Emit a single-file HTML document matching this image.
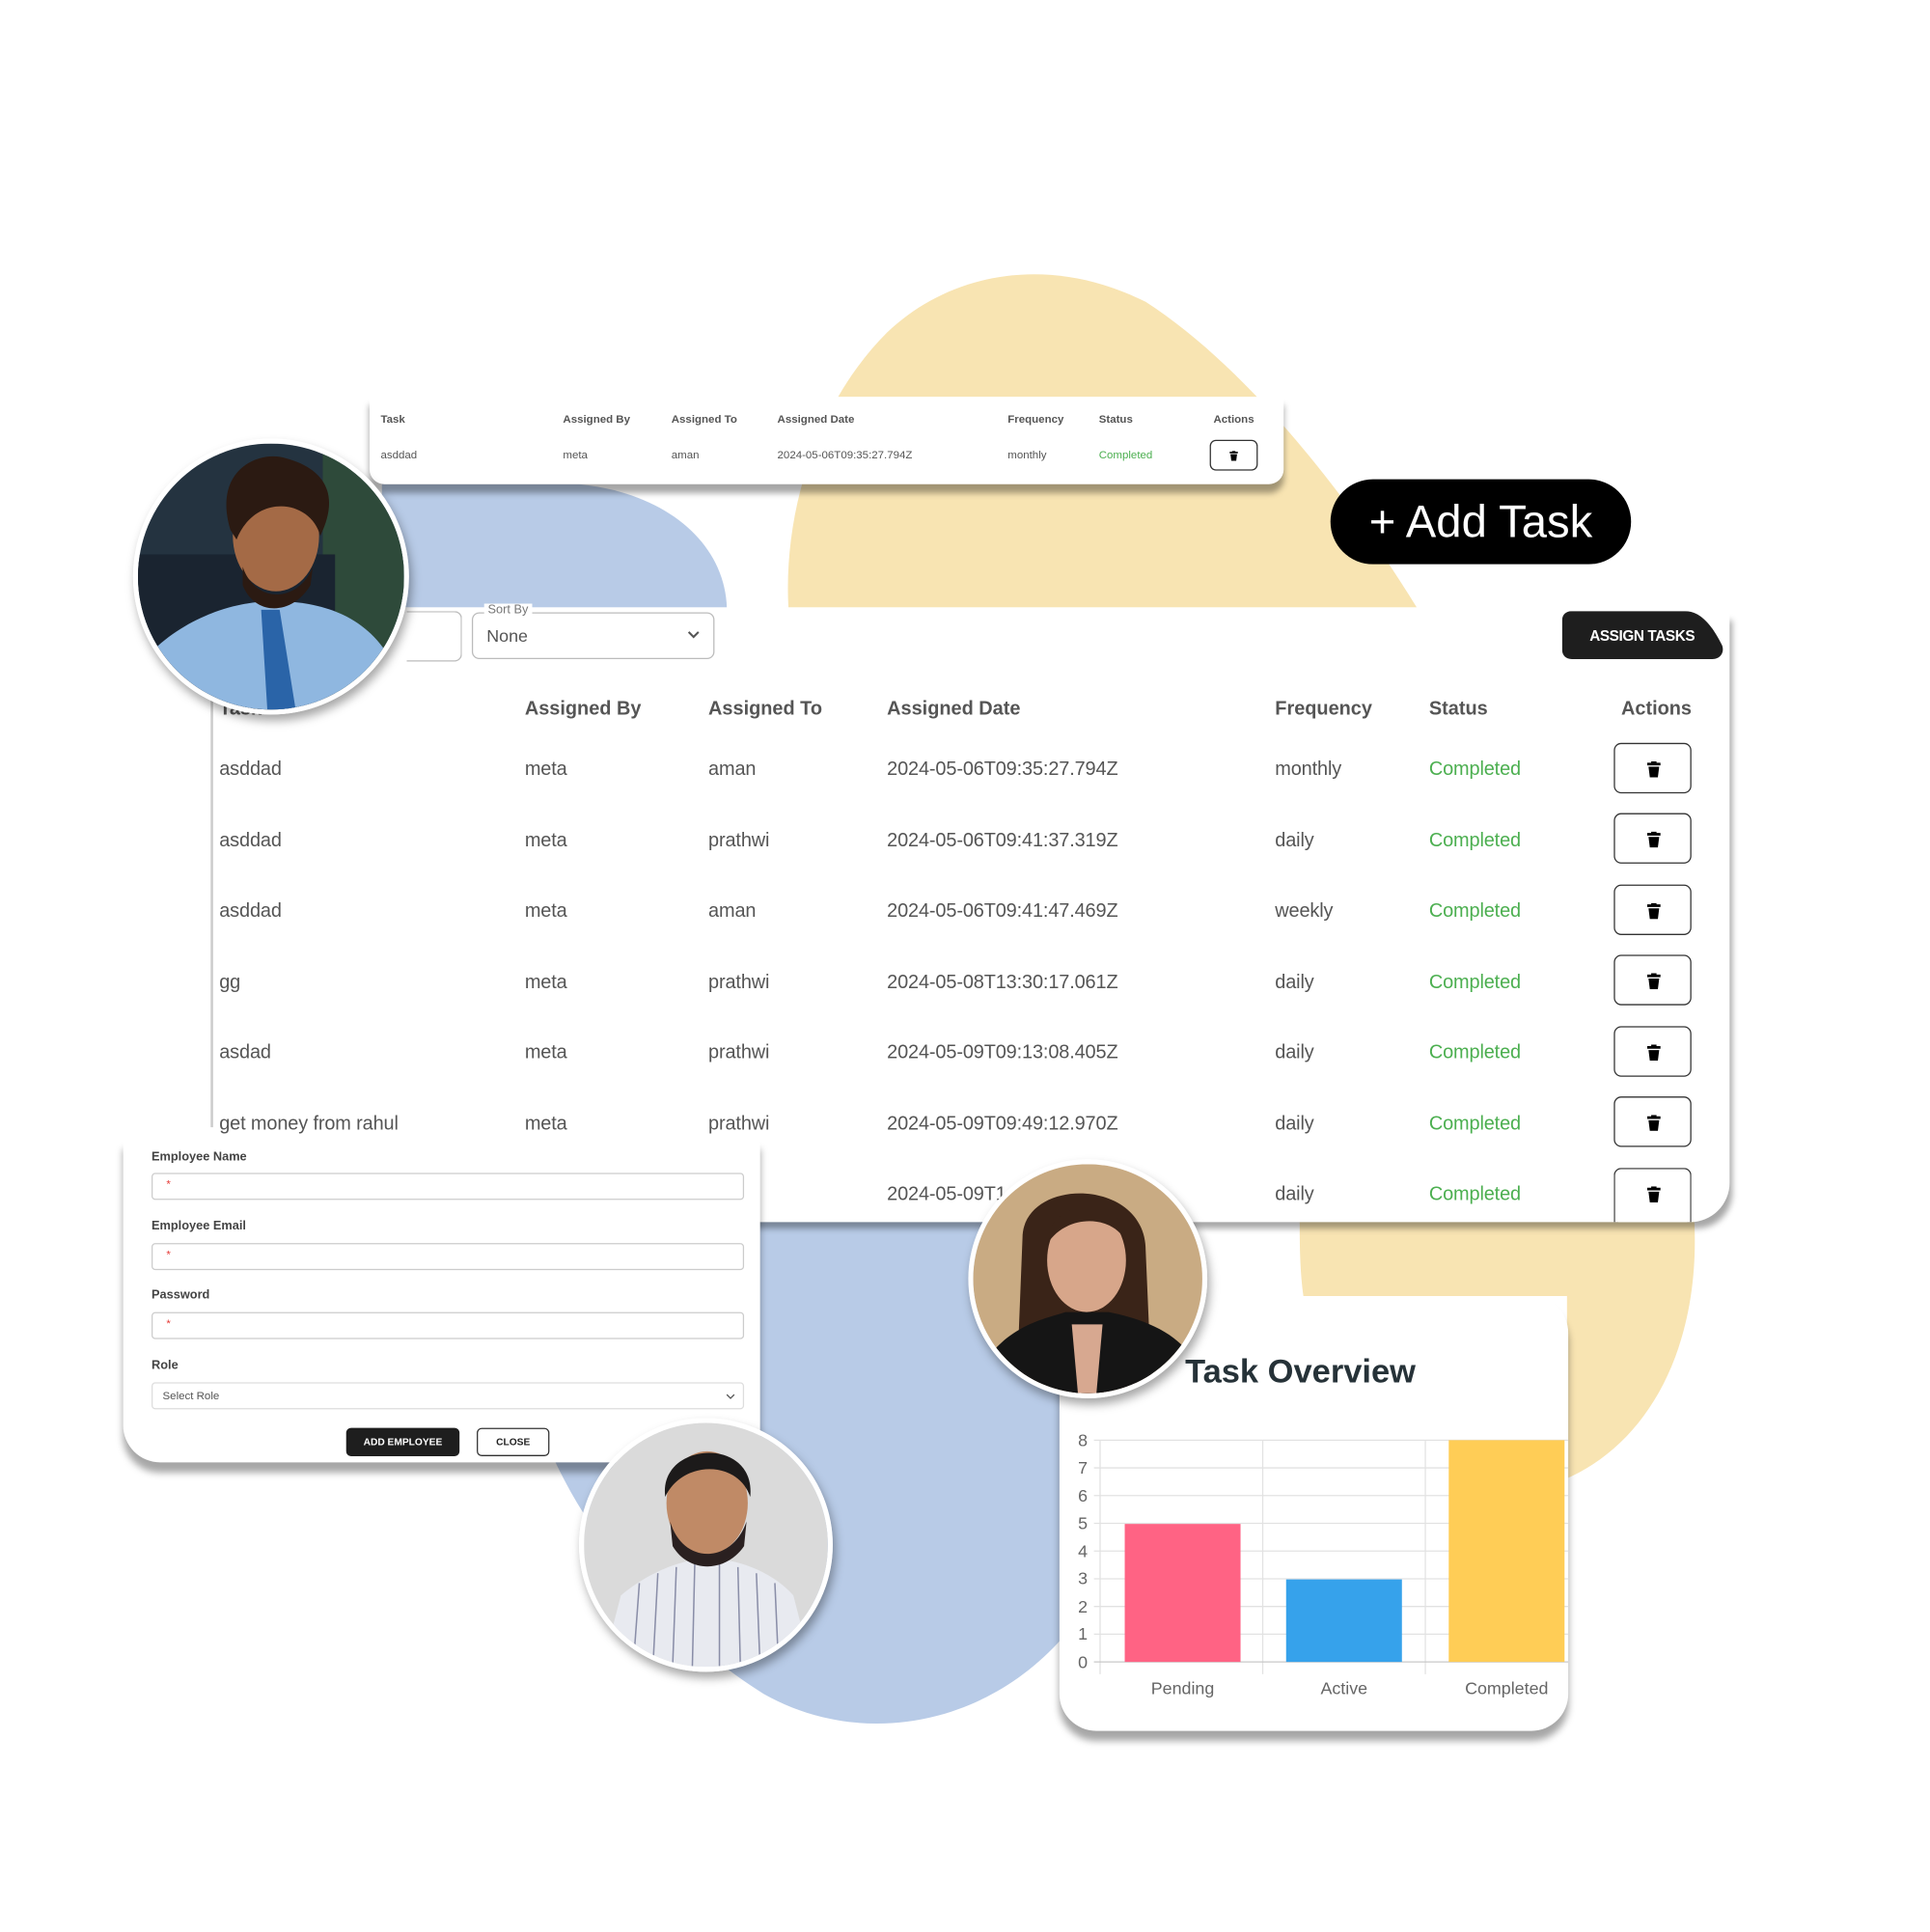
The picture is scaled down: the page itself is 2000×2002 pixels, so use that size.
<!DOCTYPE html>
<html><head><meta charset="utf-8"><style>
html,body{margin:0;padding:0;background:#fff;width:2000px;height:2000px;overflow:hidden}
#s{position:absolute;left:0;top:0;width:1568px;height:1568px;transform:scale(1.2766);transform-origin:0 0;font-family:"Liberation Sans",sans-serif;color:#555}
.a{position:absolute}
.card{position:absolute;background:#fff}
.t{position:absolute;white-space:nowrap}
.h{font-weight:bold;color:#555}
.g{color:#4caf50}
.del{position:absolute;width:63px;height:41px;border:1px solid #333;border-radius:6px;box-sizing:border-box;background:#fff}
.del svg{position:absolute;left:26px;top:14px}
.inp{position:absolute;left:23px;width:481px;height:22px;border:1px solid #ccc;border-radius:3px;box-sizing:border-box}
.inp i{position:absolute;left:11px;top:3px;color:#e53935;font-style:normal;font-size:9px}
.lbl{position:absolute;left:23px;font-size:10px;font-weight:bold;color:#444}
.ph{position:absolute;border-radius:50%;overflow:hidden;border:4px solid #fff;box-shadow:2px 5px 8px rgba(0,0,0,.35)}
.rows{font-size:15.6px;letter-spacing:-0.1px}
</style></head><body><div id="s">
<svg class="a" style="left:0;top:0" width="1545" height="1545">
<path d="M640,493 C636,420 660,330 720,270 C770,222 850,205 930,245 C1000,290 1080,380 1150,493 Z" fill="#f8e4b2"/>
<path d="M310,393 L470,393 C540,400 588,440 590,493 L310,493 Z" fill="#b8cbe7"/>
<path d="M1055,985 L1375,985 C1382,1090 1340,1170 1272,1200 L1272,1052 L1058,1052 C1055,1030 1055,1010 1055,985Z" fill="#f8e4b2"/>
<path d="M615,985 L862,985 L862,1330 C800,1400 700,1420 620,1375 C540,1325 480,1250 450,1185 L615,1185 Z" fill="#b8cbe7"/>
</svg>

<div class="card" style="left:300px;top:322px;width:742px;height:71px;border-radius:0 0 12px 12px;box-shadow:0 7px 5px rgba(0,0,0,.35);font-size:9px">
<span class="t h" style="left:9px;top:13px">Task</span><span class="t h" style="left:157px;top:13px">Assigned By</span><span class="t h" style="left:245px;top:13px">Assigned To</span><span class="t h" style="left:331px;top:13px">Assigned Date</span><span class="t h" style="left:518px;top:13px">Frequency</span><span class="t h" style="left:592px;top:13px">Status</span><span class="t h" style="left:685px;top:13px">Actions</span>
<span class="t" style="left:9px;top:42px">asddad</span><span class="t" style="left:157px;top:42px">meta</span><span class="t" style="left:245px;top:42px">aman</span><span class="t" style="left:331px;top:42px">2024-05-06T09:35:27.794Z</span><span class="t" style="left:518px;top:42px">monthly</span><span class="t g" style="left:592px;top:42px">Completed</span>
<div class="del" style="left:682px;top:35px;width:39px;height:25px;border-radius:5px"><svg style="left:15px;top:8px" width="7" height="8" viewBox="0 0 10 12"><path d="M3 0h4v1h3v2H0V1h3z M1 4h8l-1 8H2z" fill="#000"/></svg></div>
</div>

<div class="a" style="left:1080px;top:389px;width:244px;height:69px;border-radius:35px;background:#000;color:#fff;font-size:37px;line-height:69px;text-align:center">+ Add Task</div>

<div class="card" style="left:100px;top:493px;width:1304px;height:499px;border-radius:0 0 32px 0;box-shadow:5px 8px 5px -3px rgba(0,0,0,.35);font-size:15.6px">
<div class="a" style="left:230px;top:3px;width:44px;height:39px;border:1px solid #bbb;border-left:none;border-radius:0 6px 6px 0"></div>
<div class="a" style="left:283px;top:4px;width:197px;height:38px;border:1px solid #bbb;border-radius:6px;box-sizing:border-box"></div>
<span class="t" style="left:293px;top:-3px;font-size:10px;color:#777;background:#fff;padding:0 3px">Sort By</span>
<span class="t" style="left:295px;top:15px;font-size:14px">None</span>
<svg class="a" style="left:458px;top:19px" width="10" height="7"><path d="M1 1l4 4 4-4" stroke="#555" stroke-width="1.6" fill="none"/></svg>
<div class="a" style="left:71px;top:50px;width:2px;height:372px;background:#ccc"></div>
<span class="t h" style="left:78px;top:74px">Task</span><span class="t h" style="left:326px;top:74px">Assigned By</span><span class="t h" style="left:475px;top:74px">Assigned To</span><span class="t h" style="left:620px;top:74px">Assigned Date</span><span class="t h" style="left:935px;top:74px">Frequency</span><span class="t h" style="left:1060px;top:74px">Status</span><span class="t h" style="left:1216px;top:74px">Actions</span>
</div>
<div class="a rows" style="left:0;top:2px;color:#555">
<span class="t" style="left:178px;top:614px">asddad</span><span class="t" style="left:426px;top:614px">meta</span><span class="t" style="left:575px;top:614px">aman</span><span class="t" style="left:720px;top:614px">2024-05-06T09:35:27.794Z</span><span class="t" style="left:1035px;top:614px">monthly</span><span class="t g" style="left:1160px;top:614px">Completed</span>
<span class="t" style="left:178px;top:672px">asddad</span><span class="t" style="left:426px;top:672px">meta</span><span class="t" style="left:575px;top:672px">prathwi</span><span class="t" style="left:720px;top:672px">2024-05-06T09:41:37.319Z</span><span class="t" style="left:1035px;top:672px">daily</span><span class="t g" style="left:1160px;top:672px">Completed</span>
<span class="t" style="left:178px;top:729px">asddad</span><span class="t" style="left:426px;top:729px">meta</span><span class="t" style="left:575px;top:729px">aman</span><span class="t" style="left:720px;top:729px">2024-05-06T09:41:47.469Z</span><span class="t" style="left:1035px;top:729px">weekly</span><span class="t g" style="left:1160px;top:729px">Completed</span>
<span class="t" style="left:178px;top:787px">gg</span><span class="t" style="left:426px;top:787px">meta</span><span class="t" style="left:575px;top:787px">prathwi</span><span class="t" style="left:720px;top:787px">2024-05-08T13:30:17.061Z</span><span class="t" style="left:1035px;top:787px">daily</span><span class="t g" style="left:1160px;top:787px">Completed</span>
<span class="t" style="left:178px;top:844px">asdad</span><span class="t" style="left:426px;top:844px">meta</span><span class="t" style="left:575px;top:844px">prathwi</span><span class="t" style="left:720px;top:844px">2024-05-09T09:13:08.405Z</span><span class="t" style="left:1035px;top:844px">daily</span><span class="t g" style="left:1160px;top:844px">Completed</span>
<span class="t" style="left:178px;top:902px">get money from rahul</span><span class="t" style="left:426px;top:902px">meta</span><span class="t" style="left:575px;top:902px">prathwi</span><span class="t" style="left:720px;top:902px">2024-05-09T09:49:12.970Z</span><span class="t" style="left:1035px;top:902px">daily</span><span class="t g" style="left:1160px;top:902px">Completed</span>
<span class="t" style="left:720px;top:959px">2024-05-09T1</span><span class="t" style="left:1035px;top:959px">daily</span><span class="t g" style="left:1160px;top:959px">Completed</span>
</div>
<div class="del" style="left:1310px;top:603px"><svg width="11" height="13" viewBox="0 0 10 12"><path d="M3 0h4v1h3v2H0V1h3z M1 4h8l-1 8H2z" fill="#000"/></svg></div>
<div class="del" style="left:1310px;top:660px"><svg width="11" height="13" viewBox="0 0 10 12"><path d="M3 0h4v1h3v2H0V1h3z M1 4h8l-1 8H2z" fill="#000"/></svg></div>
<div class="del" style="left:1310px;top:718px"><svg width="11" height="13" viewBox="0 0 10 12"><path d="M3 0h4v1h3v2H0V1h3z M1 4h8l-1 8H2z" fill="#000"/></svg></div>
<div class="del" style="left:1310px;top:775px"><svg width="11" height="13" viewBox="0 0 10 12"><path d="M3 0h4v1h3v2H0V1h3z M1 4h8l-1 8H2z" fill="#000"/></svg></div>
<div class="del" style="left:1310px;top:833px"><svg width="11" height="13" viewBox="0 0 10 12"><path d="M3 0h4v1h3v2H0V1h3z M1 4h8l-1 8H2z" fill="#000"/></svg></div>
<div class="del" style="left:1310px;top:890px"><svg width="11" height="13" viewBox="0 0 10 12"><path d="M3 0h4v1h3v2H0V1h3z M1 4h8l-1 8H2z" fill="#000"/></svg></div>
<div class="del" style="left:1310px;top:948px;height:44px;border-bottom:none;border-radius:6px 6px 0 0"><svg width="11" height="13" viewBox="0 0 10 12"><path d="M3 0h4v1h3v2H0V1h3z M1 4h8l-1 8H2z" fill="#000"/></svg></div>

<svg class="a" style="left:1268px;top:496px" width="132" height="40"><path d="M8 0H100C115 0 125 18 130 28C132 34 128 39 122 39H8C3 39 0 36 0 31V8C0 3 3 0 8 0Z" fill="#1e1e1e"/><text x="65" y="24" text-anchor="middle" font-family="Liberation Sans" font-weight="bold" font-size="12" fill="#fff" letter-spacing="-0.3">ASSIGN TASKS</text></svg>

<div class="card" style="left:100px;top:925px;width:517px;height:262px;border-radius:0 0 8px 30px;box-shadow:0 8px 6px rgba(0,0,0,.35)">
<span class="lbl" style="top:9px">Employee Name</span><div class="inp" style="top:27px"><i>*</i></div>
<span class="lbl" style="top:65px">Employee Email</span><div class="inp" style="top:84px"><i>*</i></div>
<span class="lbl" style="top:121px">Password</span><div class="inp" style="top:140px"><i>*</i></div>
<span class="lbl" style="top:178px">Role</span><div class="inp" style="top:197px;border-color:#ddd"><span class="t" style="left:8px;top:5px;font-size:9px;color:#555">Select Role</span><svg class="a" style="left:465px;top:8px" width="8" height="6"><path d="M1 1l3 3 3-3" stroke="#555" fill="none"/></svg></div>
<div class="a" style="left:181px;top:234px;width:92px;height:23px;background:#1e1e1e;border-radius:4px;color:#fff;font-size:8px;font-weight:bold;text-align:center;line-height:23px">ADD EMPLOYEE</div>
<div class="a" style="left:287px;top:234px;width:59px;height:23px;border:1px solid #333;box-sizing:border-box;border-radius:4px;color:#222;font-size:8px;font-weight:bold;text-align:center;line-height:21px">CLOSE</div>
</div>

<div class="card" style="left:860px;top:1052px;width:413px;height:353px;border-radius:0 30px 30px 30px;box-shadow:0 8px 6px rgba(0,0,0,.35)"></div>
<span class="t" style="left:962px;top:1098px;font-size:27px;font-weight:bold;color:#263238">Task Overview</span>
<svg class="a" style="left:860px;top:1155px" width="413" height="230" font-family="Liberation Sans" font-size="14" fill="#666">
<g stroke="#e2e2e2" stroke-width="1">
<line x1="28" y1="14" x2="413" y2="14"/><line x1="28" y1="36.5" x2="413" y2="36.5"/><line x1="28" y1="59" x2="413" y2="59"/><line x1="28" y1="81.5" x2="413" y2="81.5"/><line x1="28" y1="104" x2="413" y2="104"/><line x1="28" y1="126.5" x2="413" y2="126.5"/><line x1="28" y1="149" x2="413" y2="149"/><line x1="28" y1="171.5" x2="413" y2="171.5"/>
<line x1="33" y1="14" x2="33" y2="204"/><line x1="165" y1="14" x2="165" y2="204"/><line x1="297" y1="14" x2="297" y2="204"/>
</g>
<line x1="28" y1="194" x2="413" y2="194" stroke="#c8c8c8"/>
<rect x="53" y="82" width="94" height="112" fill="#ff6384"/>
<rect x="184" y="127" width="94" height="67" fill="#36a2eb"/>
<rect x="316" y="14" width="94" height="180" fill="#ffcd56"/>
<g text-anchor="middle"><text x="19" y="19">8</text><text x="19" y="41">7</text><text x="19" y="64">6</text><text x="19" y="86">5</text><text x="19" y="109">4</text><text x="19" y="131">3</text><text x="19" y="154">2</text><text x="19" y="176">1</text><text x="19" y="199">0</text>
<text x="100" y="220">Pending</text><text x="231" y="220">Active</text><text x="363" y="220">Completed</text></g>
</svg>

<div class="ph" style="left:108px;top:356px;width:216px;height:216px">
<svg width="216" height="216"><rect width="216" height="216" fill="#243340"/><rect x="150" y="0" width="66" height="216" fill="#2e4a3a"/><rect x="0" y="90" width="160" height="130" fill="#1a2430"/>
<path d="M0 216 L10 170 C40 140 80 128 110 128 C150 128 185 140 205 175 L216 216Z" fill="#8fb7e0"/>
<path d="M100 135 L115 135 L128 216 L105 216Z" fill="#2a64a8"/>
<ellipse cx="112" cy="75" rx="35" ry="45" fill="#a46a46"/><path d="M75 70 C60 20 100 5 120 12 C150 20 165 40 148 75 C140 45 95 40 80 78Z" fill="#2b1a12"/><path d="M85 100 C95 130 130 130 142 100 L140 115 C125 140 95 140 85 115Z" fill="#2b1a12"/></svg></div>
<div class="ph" style="left:786px;top:941px;width:186px;height:186px">
<svg width="186" height="186"><rect width="186" height="186" fill="#c9ab83"/><path d="M40 60 C40 10 140 10 140 70 L145 186 L35 186Z" fill="#3a2418"/><path d="M0 186 L10 160 C30 130 60 125 75 120 L110 120 C135 125 165 135 180 160 L186 186Z" fill="#151515"/><path d="M80 130 L105 130 L100 186 L85 186Z" fill="#d7a890"/><ellipse cx="92" cy="78" rx="32" ry="42" fill="#d7a68a"/><path d="M60 65 C60 25 125 25 125 65 C115 40 75 40 60 65Z" fill="#3a2418"/></svg></div>
<div class="ph" style="left:470px;top:1151px;width:198px;height:198px">
<svg width="198" height="198"><rect width="198" height="198" fill="#dadada"/><path d="M15 198 L30 140 C60 115 90 110 100 110 C120 110 150 118 170 140 L185 198Z" fill="#e8eaf0"/><g stroke="#8a8ea8" stroke-width="1.2"><line x1="45" y1="130" x2="40" y2="198"/><line x1="60" y1="122" x2="56" y2="198"/><line x1="75" y1="117" x2="72" y2="198"/><line x1="90" y1="113" x2="88" y2="198"/><line x1="110" y1="113" x2="110" y2="198"/><line x1="125" y1="117" x2="127" y2="198"/><line x1="140" y1="122" x2="143" y2="198"/><line x1="155" y1="130" x2="158" y2="198"/></g><ellipse cx="100" cy="65" rx="33" ry="42" fill="#c08a66"/><path d="M66 60 C60 15 140 10 135 60 C125 30 80 30 66 60Z" fill="#1c1a1a"/><path d="M70 80 C80 115 120 115 132 80 L130 100 C115 122 85 122 72 100Z" fill="#2a2020"/></svg></div>
</div></body></html>
